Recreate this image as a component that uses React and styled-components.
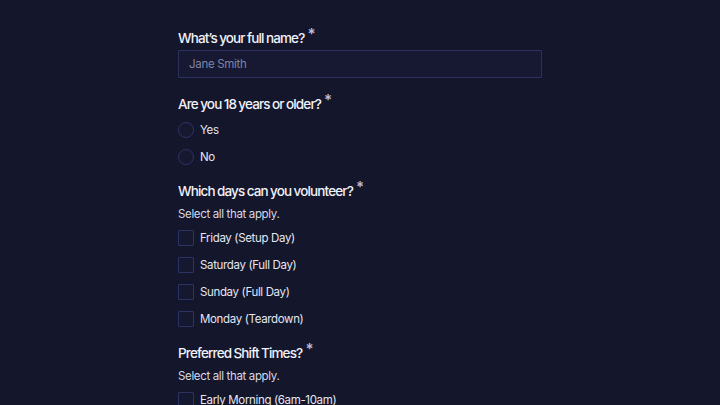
import React from 'react';
import styled, { createGlobalStyle } from 'styled-components';

// =======================
//   Global Styles
// =======================

const GlobalStyle = createGlobalStyle`
  html, body {
    margin: 0;
    padding: 0;
    background: #14162b;
  }
  body {
    font-family: Inter, "Noto Sans", sans-serif;
    color: #eceef8;
    -webkit-font-smoothing: antialiased;
  }
`;

// =======================
//   Component Styles
// =======================

const Form = styled.form`
  width: 364px;
  margin: 0 auto;
  padding-top: 28px;
  display: flex;
  flex-direction: column;
  gap: 14px;
`;

const Section = styled.div`
  display: flex;
  flex-direction: column;
  margin-bottom: ${props => props.extra || 0}px;
`;

const Question = styled.label`
  font-size: 13.5px;
  font-weight: 500;
  line-height: 20px;
  letter-spacing: -0.85px;
  word-spacing: -0.5px;
  color: #f0f1fa;
  margin-bottom: ${props => props.gap || 6}px;
`;

const Star = styled.sup`
  font-size: 15px;
  font-weight: 600;
  color: #b9bdd9;
  margin-left: 3px;
  vertical-align: 0;
  position: relative;
  top: -4px;
`;

const Helper = styled.p`
  margin: 0 0 5px;
  font-size: 11.5px;
  line-height: 18px;
  letter-spacing: -0.35px;
  color: #d6d8e6;
`;

const TextInput = styled.input`
  box-sizing: border-box;
  width: 100%;
  height: 28px;
  padding: 0 10px;
  background: #161931;
  border: 1px solid #2b305e;
  border-radius: 1px;
  font-family: inherit;
  font-size: 11.5px;
  letter-spacing: -0.3px;
  color: #eceef8;
  outline: none;

  &::placeholder {
    color: #7f84a6;
  }
`;

const Options = styled.div`
  display: flex;
  flex-direction: column;
  gap: 7px;
`;

const Option = styled.label`
  display: flex;
  align-items: center;
  gap: 6px;
  height: 20px;
  font-size: 11.5px;
  letter-spacing: -0.35px;
  color: #e4e6f2;
`;

const Mark = styled.span`
  box-sizing: border-box;
  width: 16px;
  height: 16px;
  border: 1px solid #2d3264;
  border-radius: ${props => (props.round ? '50%' : '1px')};
  background: #15182f;
  flex-shrink: 0;
`;

// =======================
//     Data
// =======================

const days = [
  'Friday (Setup Day)',
  'Saturday (Full Day)',
  'Sunday (Full Day)',
  'Monday (Teardown)'
];

const shifts = [
  'Early Morning (6am-10am)',
  'Late Morning (10am-2pm)',
  'Afternoon (2pm-6pm)'
];

// =======================
//     Components
// =======================

const Required = ({ children }) => (
  <>
    {children}
    <Star>*</Star>
  </>
);

const ChoiceList = ({ items, round }) => (
  <Options>
    {items.map(item => (
      <Option key={item}>
        <Mark round={round ? 1 : 0} />
        {item}
      </Option>
    ))}
  </Options>
);

const App = () => {
  return (
    <>
      <GlobalStyle />
      <Form onSubmit={e => e.preventDefault()}>
        <Section extra={2}>
          <Question gap={2}>
            <Required>What’s your full name?</Required>
          </Question>
          <TextInput placeholder="Jane Smith" />
        </Section>

        <Section>
          <Question>
            <Required>Are you 18 years or older?</Required>
          </Question>
          <ChoiceList items={['Yes', 'No']} round />
        </Section>

        <Section>
          <Question gap={4}>
            <Required>Which days can you volunteer?</Required>
          </Question>
          <Helper>Select all that apply.</Helper>
          <ChoiceList items={days} />
        </Section>

        <Section>
          <Question gap={4}>
            <Required>Preferred Shift Times?</Required>
          </Question>
          <Helper>Select all that apply.</Helper>
          <ChoiceList items={shifts} />
        </Section>
      </Form>
    </>
  );
};

export default App;
